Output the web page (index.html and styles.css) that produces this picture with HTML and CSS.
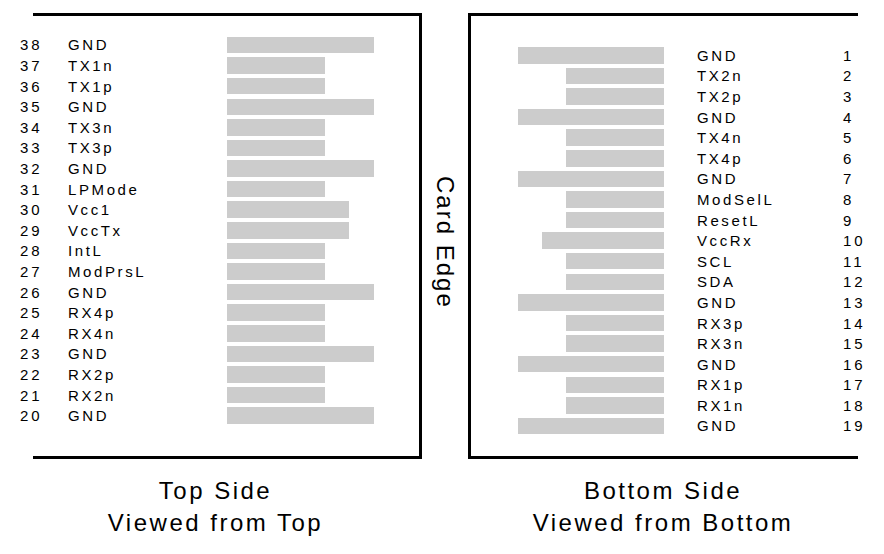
FILE: index.html
```html
<!DOCTYPE html>
<html>
<head>
<meta charset="utf-8">
<link rel="stylesheet" href="styles.css">
</head>
<body>
<div class="page">
  <div class="boards">
    <div class="panel panel-top">
      <div class="pins pins-top">
        <div class="pin"><span class="num">38</span><span class="name">GND</span><span class="bar long"></span></div>
        <div class="pin"><span class="num">37</span><span class="name">TX1n</span><span class="bar short"></span></div>
        <div class="pin"><span class="num">36</span><span class="name">TX1p</span><span class="bar short"></span></div>
        <div class="pin"><span class="num">35</span><span class="name">GND</span><span class="bar long"></span></div>
        <div class="pin"><span class="num">34</span><span class="name">TX3n</span><span class="bar short"></span></div>
        <div class="pin"><span class="num">33</span><span class="name">TX3p</span><span class="bar short"></span></div>
        <div class="pin"><span class="num">32</span><span class="name">GND</span><span class="bar long"></span></div>
        <div class="pin"><span class="num">31</span><span class="name">LPMode</span><span class="bar short"></span></div>
        <div class="pin"><span class="num">30</span><span class="name">Vcc1</span><span class="bar mid"></span></div>
        <div class="pin"><span class="num">29</span><span class="name">VccTx</span><span class="bar mid"></span></div>
        <div class="pin"><span class="num">28</span><span class="name">IntL</span><span class="bar short"></span></div>
        <div class="pin"><span class="num">27</span><span class="name">ModPrsL</span><span class="bar short"></span></div>
        <div class="pin"><span class="num">26</span><span class="name">GND</span><span class="bar long"></span></div>
        <div class="pin"><span class="num">25</span><span class="name">RX4p</span><span class="bar short"></span></div>
        <div class="pin"><span class="num">24</span><span class="name">RX4n</span><span class="bar short"></span></div>
        <div class="pin"><span class="num">23</span><span class="name">GND</span><span class="bar long"></span></div>
        <div class="pin"><span class="num">22</span><span class="name">RX2p</span><span class="bar short"></span></div>
        <div class="pin"><span class="num">21</span><span class="name">RX2n</span><span class="bar short"></span></div>
        <div class="pin"><span class="num">20</span><span class="name">GND</span><span class="bar long"></span></div>
      </div>
    </div>
    <div class="edge"><span class="edge-label">Card Edge</span></div>
    <div class="panel panel-bottom">
      <div class="pins pins-bottom">
        <div class="pin"><span class="bar long"></span><span class="name">GND</span><span class="num">1</span></div>
        <div class="pin"><span class="bar short"></span><span class="name">TX2n</span><span class="num">2</span></div>
        <div class="pin"><span class="bar short"></span><span class="name">TX2p</span><span class="num">3</span></div>
        <div class="pin"><span class="bar long"></span><span class="name">GND</span><span class="num">4</span></div>
        <div class="pin"><span class="bar short"></span><span class="name">TX4n</span><span class="num">5</span></div>
        <div class="pin"><span class="bar short"></span><span class="name">TX4p</span><span class="num">6</span></div>
        <div class="pin"><span class="bar long"></span><span class="name">GND</span><span class="num">7</span></div>
        <div class="pin"><span class="bar short"></span><span class="name">ModSelL</span><span class="num">8</span></div>
        <div class="pin"><span class="bar short"></span><span class="name">ResetL</span><span class="num">9</span></div>
        <div class="pin"><span class="bar mid"></span><span class="name">VccRx</span><span class="num">10</span></div>
        <div class="pin"><span class="bar short"></span><span class="name">SCL</span><span class="num">11</span></div>
        <div class="pin"><span class="bar short"></span><span class="name">SDA</span><span class="num">12</span></div>
        <div class="pin"><span class="bar long"></span><span class="name">GND</span><span class="num">13</span></div>
        <div class="pin"><span class="bar short"></span><span class="name">RX3p</span><span class="num">14</span></div>
        <div class="pin"><span class="bar short"></span><span class="name">RX3n</span><span class="num">15</span></div>
        <div class="pin"><span class="bar long"></span><span class="name">GND</span><span class="num">16</span></div>
        <div class="pin"><span class="bar short"></span><span class="name">RX1p</span><span class="num">17</span></div>
        <div class="pin"><span class="bar short"></span><span class="name">RX1n</span><span class="num">18</span></div>
        <div class="pin"><span class="bar long"></span><span class="name">GND</span><span class="num">19</span></div>
      </div>
    </div>
  </div>
  <div class="captions">
    <div class="caption caption-top">Top Side<br>Viewed from Top</div>
    <div class="caption caption-bottom">Bottom Side<br>Viewed from Bottom</div>
  </div>
</div>
</body>
</html>
```

FILE: styles.css
```css
html, body {
  margin: 0;
  padding: 0;
  background: #ffffff;
}

body {
  font-family: "Liberation Sans", Arial, sans-serif;
  color: #000000;
}

.page {
  width: 884px;
  height: 554px;
  padding-top: 13px;
  box-sizing: border-box;
}

.boards {
  display: flex;
  height: 446px;
}

.panel {
  box-sizing: border-box;
  height: 446px;
  border-top: 3px solid #000;
  border-bottom: 3px solid #000;
}

.panel-top {
  margin-left: 33px;
  width: 389px;
  border-right: 3px solid #000;
  padding-top: 18.7px;
}

.panel-bottom {
  width: 390px;
  border-left: 3px solid #000;
  padding-top: 29px;
}

.edge {
  width: 46px;
  display: flex;
  align-items: center;
  justify-content: center;
  padding-top: 12px;
  box-sizing: border-box;
}

.edge-label {
  writing-mode: vertical-rl;
  font-size: 24px;
  letter-spacing: 2px;
  line-height: 28px;
  white-space: nowrap;
}

.pins {
  display: flex;
  flex-direction: column;
}

.pin {
  height: 20.6px;
  display: grid;
  align-items: center;
  font-size: 15px;
  line-height: 17px;
  white-space: nowrap;
}

.pins-top {
  margin-left: -13px;
}

.pins-top .pin {
  grid-template-columns: 48px 159px 147px;
}

.pins-bottom {
  padding-left: 47px;
}

.pins-bottom .pin {
  grid-template-columns: 146px 179px 40px;
}

.pins-bottom .bar {
  justify-self: end;
}

.pins-bottom .name {
  padding-left: 33px;
}

.name {
  letter-spacing: 2.6px;
}

.num {
  letter-spacing: 3px;
}

.bar {
  display: block;
  height: 16.5px;
  background: #cccccc;
}

.bar.long {
  width: 147px;
}

.bar.mid {
  width: 122px;
}

.bar.short {
  width: 98px;
}

.pins-bottom .bar.long {
  width: 146px;
}

.captions {
  display: flex;
  margin-top: 16px;
}

.caption {
  font-size: 24px;
  line-height: 32px;
  letter-spacing: 2.5px;
  text-align: center;
  box-sizing: border-box;
}

.caption-top {
  margin-left: 33px;
  width: 389px;
  padding-right: 24px;
}

.caption-bottom {
  margin-left: 46px;
  width: 390px;
}
```
